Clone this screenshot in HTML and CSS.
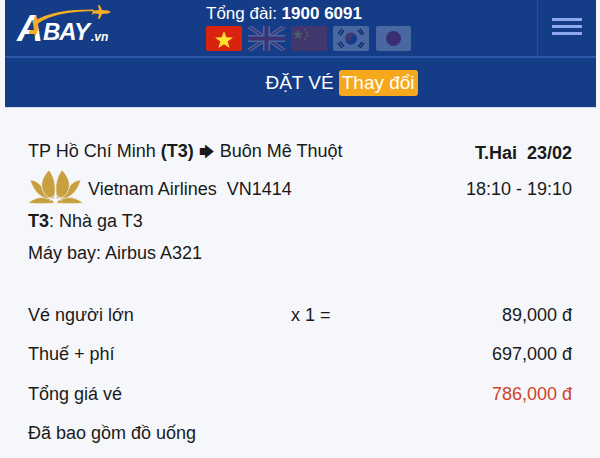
FILE: index.html
```html
<!doctype html>
<html>

<head>
    <title>ABAY.vn</title>
    <link rel="stylesheet" href="styles.css">
</head>

<body>
    <div class="topBar">
        <a class="logo">
            <svg width="110" height="50" viewBox="0 0 110 50">
                <defs>
                    <linearGradient id="logoFade" x1="0" y1="0" x2="0" y2="1">
                        <stop offset="0" stop-color="#ffffff" />
                        <stop offset="0.7" stop-color="#ffffff" />
                        <stop offset="1" stop-color="#b4bdd0" />
                    </linearGradient>
                    <linearGradient id="logoBand" gradientUnits="userSpaceOnUse" x1="11" y1="0" x2="37" y2="0" gradientTransform="translate(14.350 0) skewX(-19.300)">
                        <stop offset="0.35" stop-color="#ffffff" />
                        <stop offset="0.35" stop-color="#f4ae24" />
                        <stop offset="0.65" stop-color="#f4ae24" />
                        <stop offset="0.65" stop-color="#ffffff" />
                    </linearGradient>
                </defs>
                <path d="M29 26 C42 15 60 12 87 11 L87 9.500 C62 9.500 42 12 27 22 Z" fill="#f4ae24" />
                <text class="logoA" x="11" y="41" fill="url(#logoBand)">A</text>
                <path d="M92 5 L94 5.500 L96 10 L102 10.500 L105 12 L102 13.500 L96 14 L94 18.500 L92 19 L93 14 L88 13.500 L86 15 L86.500 12 L86 9 L88 10.500 L93 10 Z" fill="#f4ae24" />
                <text class="logoBay" x="37" y="40" fill="url(#logoFade)">BAY</text>
                <text class="logoVn" x="85" y="41" fill="#ffffff">.vn</text>
            </svg>
        </a>

        <div class="hotline">
            <div class="hotlineText">Tổng đài: <b>1900 6091</b></div>
            <div class="flags">
                <svg class="flag" width="36" height="25" viewBox="0 0 36 25">
                    <rect width="36" height="25" rx="2" fill="#d9230f" />
                    <polygon points="18,5 20.300,11.300 27,11.500 21.700,15.600 23.600,22 18,18.300 12.400,22 14.300,15.600 9,11.500 15.700,11.300" fill="#ffe22e" />
                </svg>
                <svg class="flag dim" width="37" height="25" viewBox="0 0 37 25">
                    <rect width="37" height="25" fill="#2b3f8f" />
                    <path d="M0 0 L37 25 M37 0 L0 25" stroke="#ffffff" stroke-width="4" />
                    <path d="M0 0 L37 25 M37 0 L0 25" stroke="#cf142b" stroke-width="1.500" />
                    <path d="M18.500 0 V25 M0 12.500 H37" stroke="#ffffff" stroke-width="7" />
                    <path d="M18.500 0 V25 M0 12.500 H37" stroke="#cf142b" stroke-width="4" />
                </svg>
                <svg class="flag dim" width="36" height="25" viewBox="0 0 36 25">
                    <rect width="36" height="25" rx="2" fill="#de2910" />
                    <polygon points="7,3 8.300,7 12,7 9,9.500 10.200,13 7,11 3.800,13 5,9.500 2,7 5.700,7" fill="#ffde00" />
                    <circle cx="14" cy="3.500" r="1" fill="#ffde00" />
                    <circle cx="16" cy="6.500" r="1" fill="#ffde00" />
                    <circle cx="16" cy="10" r="1" fill="#ffde00" />
                    <circle cx="14" cy="13" r="1" fill="#ffde00" />
                </svg>
                <svg class="flag dim" width="36" height="25" viewBox="0 0 36 25">
                    <rect width="36" height="25" rx="2" fill="#ffffff" />
                    <circle cx="18" cy="12.500" r="6" fill="#cd2e3a" />
                    <path d="M12 12.500 A6 6 0 0 0 24 12.500 A3 3 0 0 0 18 12.500 A3 3 0 0 1 12 12.500 Z" fill="#0047a0" />
                    <path d="M5 8 L9 3 M7 9.500 L11 4.500 M25 4 L29 9 M27 3 L31 8 M5 17 L9 22 M7 15.500 L11 20.500 M25 21 L29 16 M27 22 L31 17" stroke="#000000" stroke-width="1.500" />
                </svg>
                <svg class="flag dim flagLast" width="35" height="25" viewBox="0 0 35 25">
                    <rect width="35" height="25" rx="2" fill="#ffffff" />
                    <circle cx="17.500" cy="12.500" r="7.500" fill="#bc002d" />
                </svg>
            </div>
        </div>

        <div class="menuBox">
            <span class="menuLine"></span>
            <span class="menuLine"></span>
            <span class="menuLine"></span>
        </div>
    </div>

    <div class="subBar">
        <span>ĐẶT VÉ</span>
        <span class="changeBtn">Thay đổi</span>
    </div>

    <div class="content">
        <div class="row flightRow">
            <span>TP Hồ Chí Minh <b>(T3)</b> <span class="arrow">🡆</span> Buôn Mê Thuột</span>
            <b>T.Hai&nbsp; 23/02</b>
        </div>

        <div class="row airlineRow">
            <span class="airline">
                <svg class="lotus" width="55" height="34" viewBox="0 0 55 34">
                    <g fill="#c9a03f" stroke="#f5f7fb" stroke-width="0.700">
                        <path d="M0 33 C7 27 16 26 23 29 L27 33 C18 34 8 34 0 33 Z" />
                        <path d="M55 33 C48 27 39 26 32 29 L28 33 C37 34 47 34 55 33 Z" />
                        <path d="M2 10 C8 10 13 14 16 21 C18 25 20 27 23 29 C13 29 6 22 2 10 Z" />
                        <path d="M53 10 C47 10 42 14 39 21 C37 25 35 27 32 29 C42 29 49 22 53 10 Z" />
                        <path d="M21 0 C14 7 12 15 15 21 C17 26 21 28 26 29 C28 20 28 9 21 0 Z" />
                        <path d="M34 0 C41 7 43 15 40 21 C38 26 34 28 29 29 C27 20 27 9 34 0 Z" />
                    </g>
                    <path d="M22 31 C23 24 32 24 33 31" fill="none" stroke="#f5f7fb" stroke-width="1" />
                </svg>
                <span>Vietnam Airlines&nbsp; VN1414</span>
            </span>
            <span>18:10 - 19:10</span>
        </div>

        <div class="row infoRow"><span><b>T3</b>: Nhà ga T3</span></div>
        <div class="row infoRow"><span>Máy bay: Airbus A321</span></div>

        <div class="priceList">
            <div class="priceRow">
                <span class="priceName">Vé người lớn</span>
                <span class="priceQty">x 1 =</span>
                <span class="priceValue">89,000 đ</span>
            </div>
            <div class="priceRow">
                <span class="priceName">Thuế + phí</span>
                <span class="priceQty"></span>
                <span class="priceValue">697,000 đ</span>
            </div>
            <div class="priceRow">
                <span class="priceName">Tổng giá vé</span>
                <span class="priceQty"></span>
                <span class="priceValue totalValue">786,000 đ</span>
            </div>
            <div class="priceRow">
                <span class="priceName">Đã bao gồm đồ uống</span>
            </div>
        </div>
    </div>
</body>

</html>
```

FILE: styles.css
```css
* {
    margin: 0;
    padding: 0;
    box-sizing: border-box;
}

body {
    font: 18px "Liberation Sans", Arial, sans-serif;
    color: #1a1a1a;
    background-color: #f5f7fb;
    height: 458px;
    overflow: hidden;
}

.topBar {
    margin: 0 4px 0 5px;
    height: 58px;
    background-color: #153c87;
    border-bottom: solid 2px #2a57a8;
    display: flex;
}

.logo {
    width: 191px;
    padding-left: 1px;
}

.logo svg {
    display: block;
}

.logoA {
    font: italic bold 36px "Liberation Sans", Arial, sans-serif;
}

.logoBay {
    font: italic bold 24px "Liberation Sans", Arial, sans-serif;
    letter-spacing: -1px;
}

.logoVn {
    font: italic bold 12px "Liberation Sans", Arial, sans-serif;
}

.hotline {
    width: 341px;
    padding: 4px 0 0 10px;
    color: white;
}

.hotlineText {
    font-size: 17px;
    line-height: 19px;
}

.flags {
    display: flex;
    gap: 6px;
    margin-top: 3px;
}

.flag {
    display: block;
}

.flagLast {
    margin-left: 1px;
}

.dim {
    opacity: 0.22;
}

.menuBox {
    flex: 1;
    border-left: solid 1px #2a4f98;
    display: flex;
    flex-direction: column;
    align-items: center;
    gap: 4px;
    padding-top: 18px;
}

.menuLine {
    width: 30px;
    height: 3px;
    background-color: #8fa8f0;
}

.subBar {
    margin: 0 4px 0 5px;
    height: 50px;
    background-color: #153c87;
    border-bottom: solid 1px #cfdcf0;
    color: white;
    font-size: 19px;
    display: flex;
    justify-content: center;
    align-items: center;
    gap: 5px;
    padding-left: 82px;
}

.changeBtn {
    background-color: #f6a81c;
    border-radius: 3px;
    padding: 2px 3px;
    line-height: 22px;
}

.content {
    padding: 29px 28px 0 28px;
}

.row {
    display: flex;
    justify-content: space-between;
    align-items: center;
}

.flightRow {
    height: 32px;
}

.arrow {
    font-family: "DejaVu Sans", sans-serif;
    font-size: 15px;
}

.airlineRow {
    height: 36px;
    padding-top: 4px;
}

.airline {
    display: flex;
    align-items: center;
    gap: 5px;
}

.lotus {
    display: block;
    margin-top: -4px;
}

.infoRow {
    height: 32px;
}

.priceList {
    margin-top: 27px;
}

.priceRow {
    display: flex;
    height: 39.330px;
    align-items: center;
}

.priceName {
    width: 263px;
}

.priceQty {
    width: 100px;
}

.priceValue {
    flex: 1;
    text-align: right;
}

.totalValue {
    color: #d0412a;
}
```
